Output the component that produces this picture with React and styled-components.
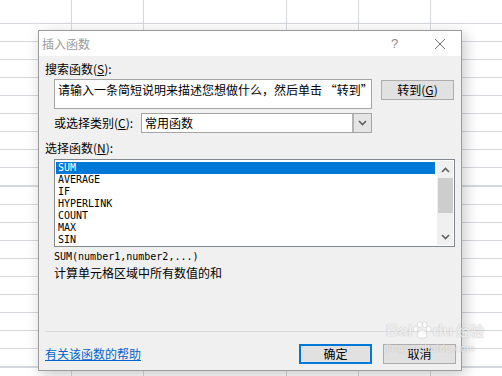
import React from 'react';
import styled, { createGlobalStyle } from 'styled-components';

const GlobalStyle = createGlobalStyle`
  html, body {
    margin: 0;
    padding: 0;
  }
  body {
    font-family: "Noto Sans CJK SC", "Liberation Sans", sans-serif;
    font-size: 12px;
    color: #000;
  }
`;

const Sheet = styled.div`
  position: relative;
  width: 502px;
  height: 376px;
  overflow: hidden;
  box-sizing: border-box;
  padding: 30px 0 0 38px;
  background-color: #fff;
  background-image:
    repeating-linear-gradient(to right, transparent 0, transparent 71px, #d5d9de 71px, #d5d9de 71.8px),
    repeating-linear-gradient(to bottom, transparent 0, transparent 4.5px, #d5d9de 4.5px, #d5d9de 5.5px, transparent 5.5px, transparent 18.1px);
`;

const Dialog = styled.div`
  width: 424px;
  height: 341px;
  box-sizing: border-box;
  border: 1px solid #9c9c9c;
  background: #f0f0f0;
  display: flex;
  flex-direction: column;
  box-shadow: 3px 4px 14px rgba(0, 0, 0, 0.22);
`;

const TitleBar = styled.div`
  height: 25px;
  background: #fff;
  display: flex;
  align-items: center;
  padding-left: 3px;
`;

const Title = styled.span`
  color: #9a9a9a;
  flex: 1;
  line-height: 16px;
`;

const HelpMark = styled.span`
  font-family: "Liberation Sans", sans-serif;
  font-size: 13px;
  color: #8a8a8a;
  width: 12px;
  margin-right: 31px;
`;

const CloseBox = styled.div`
  width: 12px;
  height: 12px;
  margin-right: 15px;
  display: flex;
`;

const Body = styled.div`
  flex: 1;
  display: flex;
  flex-direction: column;
  padding: 0 5px 6px 6px;
`;

const Label = styled.div`
  line-height: 16px;
  margin-top: ${(p) => p.$top}px;
`;

const Row = styled.div`
  display: flex;
  align-items: ${(p) => p.$align || 'flex-start'};
  margin-top: ${(p) => p.$top}px;
  margin-left: 9px;
`;

const SearchBox = styled.div`
  width: 318px;
  height: 30px;
  box-sizing: border-box;
  border: 1px solid #a5a5a5;
  background: #fff;
  padding: 2px 0 0 3px;
  line-height: 16px;
  white-space: nowrap;
  overflow: hidden;
`;

const Button = styled.div`
  width: 73px;
  height: 20px;
  box-sizing: border-box;
  border: ${(p) => (p.$primary ? '2px solid #0078d7' : '1px solid #adadad')};
  background: #e1e1e1;
  display: flex;
  align-items: center;
  justify-content: center;
  line-height: 16px;
  margin-top: ${(p) => p.$top || 0}px;
  margin-left: ${(p) => p.$left || 0}px;
`;

const CategoryLabel = styled.span`
  width: 87px;
  line-height: 16px;
`;

const Select = styled.div`
  width: 231px;
  height: 20px;
  box-sizing: border-box;
  border: 1px solid #a5a5a5;
  background: #fff;
  display: flex;
`;

const SelectValue = styled.span`
  flex: 1;
  padding-left: 3px;
  line-height: 18px;
`;

const DropButton = styled.div`
  width: 17px;
  background: #e5e5e5;
  border-left: 2px solid #b4b4b4;
  display: flex;
  align-items: center;
  justify-content: center;
`;

const ListBox = styled.div`
  margin-top: 3px;
  margin-left: 9px;
  width: 401px;
  height: 88px;
  box-sizing: border-box;
  border: 1px solid #828790;
  background: #fff;
  display: flex;
  padding: 2px 1px 2px 1px;
`;

const Items = styled.div`
  flex: 1;
`;

const Item = styled.div`
  height: 12px;
  line-height: 12px;
  padding-left: 2px;
  font-family: "DejaVu Sans Mono", monospace;
  font-size: 10px;
  background: ${(p) => (p.$selected ? '#0078d7' : 'transparent')};
  color: ${(p) => (p.$selected ? '#fff' : '#000')};
`;

const ScrollBar = styled.div`
  width: 16px;
  margin: -1px 0 -1px 2px;
  background: #f0f0f0;
  display: flex;
  flex-direction: column;
  align-items: center;
`;

const ScrollArrow = styled.div`
  height: 17px;
  width: 16px;
  display: flex;
  align-items: center;
  justify-content: center;
`;

const Thumb = styled.div`
  width: 15px;
  height: 35px;
  background: #cdcdcd;
`;

const Track = styled.div`
  flex: 1;
`;

const Syntax = styled.div`
  margin-top: 4px;
  margin-left: 9px;
  line-height: 12px;
  font-family: "DejaVu Sans Mono", monospace;
  font-size: 10px;
`;

const Description = styled.div`
  margin-top: 2px;
  margin-left: 9px;
  line-height: 16px;
`;

const Spacer = styled.div`
  flex: 1;
`;

const Separator = styled.div`
  height: 1px;
  background: #dadada;
`;

const Footer = styled.div`
  display: flex;
  align-items: center;
  margin-top: 12px;
`;

const HelpLink = styled.a`
  color: #0066cc;
  text-decoration: underline;
  line-height: 16px;
  flex: 1;
`;

const Watermark = styled.div`
  position: absolute;
  left: 386px;
  top: 321px;
  color: rgba(255, 255, 255, 0.8);
  text-shadow: 0 0 1px rgba(0, 0, 0, 0.3);
  pointer-events: none;
  display: flex;
  flex-direction: column;
`;

const MarkTop = styled.div`
  display: flex;
  align-items: flex-end;
  font-family: "Liberation Sans", sans-serif;
  font-weight: bold;
  font-size: 17px;
  line-height: 17px;
`;

const MarkCn = styled.span`
  font-family: "Noto Sans CJK SC", sans-serif;
  font-size: 14px;
  margin-left: 3px;
`;

const MarkUrl = styled.div`
  font-family: "Liberation Sans", sans-serif;
  font-size: 10px;
  line-height: 11px;
  margin-top: 4px;
  letter-spacing: 0.5px;
`;

const Chevron = ({ up, color = '#606060' }) => (
  <svg width="9" height="6" viewBox="0 0 9 6">
    <path
      d={up ? 'M1 5 L4.5 1.5 L8 5' : 'M1 1 L4.5 4.5 L8 1'}
      fill="none"
      stroke={color}
      strokeWidth="1.6"
    />
  </svg>
);

const functions = ['SUM', 'AVERAGE', 'IF', 'HYPERLINK', 'COUNT', 'MAX', 'SIN'];

const App = () => (
  <>
    <GlobalStyle />
    <Sheet>
      <Dialog>
        <TitleBar>
          <Title>插入函数</Title>
          <HelpMark>?</HelpMark>
          <CloseBox>
            <svg width="12" height="12" viewBox="0 0 12 12">
              <path d="M1 1 L11 11 M11 1 L1 11" stroke="#707070" strokeWidth="1" fill="none" />
            </svg>
          </CloseBox>
        </TitleBar>
        <Body>
          <Label $top={5}>
            搜索函数(<u>S</u>):
          </Label>
          <Row $top={2}>
            <SearchBox>请输入一条简短说明来描述您想做什么，然后单击 “转到”</SearchBox>
            <Button $top={1} $left={9}>
              转到(<u>G</u>)
            </Button>
          </Row>
          <Row $top={4} $align="center">
            <CategoryLabel>
              或选择类别(<u>C</u>):
            </CategoryLabel>
            <Select>
              <SelectValue>常用函数</SelectValue>
              <DropButton>
                <Chevron />
              </DropButton>
            </Select>
          </Row>
          <Label $top={7}>
            选择函数(<u>N</u>):
          </Label>
          <ListBox>
            <Items>
              {functions.map((name, i) => (
                <Item key={name} $selected={i === 0}>
                  {name}
                </Item>
              ))}
            </Items>
            <ScrollBar>
              <ScrollArrow>
                <Chevron up />
              </ScrollArrow>
              <Thumb />
              <Track />
              <ScrollArrow>
                <Chevron />
              </ScrollArrow>
            </ScrollBar>
          </ListBox>
          <Syntax>SUM(number1,number2,...)</Syntax>
          <Description>计算单元格区域中所有数值的和</Description>
          <Spacer />
          <Separator />
          <Footer>
            <HelpLink>有关该函数的帮助</HelpLink>
            <Button $primary>确定</Button>
            <Button $left={11}>取消</Button>
          </Footer>
        </Body>
      </Dialog>
      <Watermark>
        <MarkTop>
          Bai
          <svg width="20" height="18" viewBox="0 0 22 20">
            <g fill="rgba(255,255,255,0.8)" stroke="rgba(0,0,0,0.18)" strokeWidth="0.6">
              <ellipse cx="4" cy="9" rx="2.6" ry="3.2" />
              <ellipse cx="8.5" cy="4" rx="2.6" ry="3.2" />
              <ellipse cx="14" cy="4" rx="2.6" ry="3.2" />
              <ellipse cx="18.5" cy="9" rx="2.6" ry="3.2" />
              <path d="M11 10 C7 10 5 15 6 17.5 C7 19.5 15 19.5 16 17.5 C17 15 15 10 11 10 Z" />
            </g>
          </svg>
          du
          <MarkCn>经验</MarkCn>
        </MarkTop>
        <MarkUrl>jingyan.baidu.com</MarkUrl>
      </Watermark>
    </Sheet>
  </>
);

export default App;
